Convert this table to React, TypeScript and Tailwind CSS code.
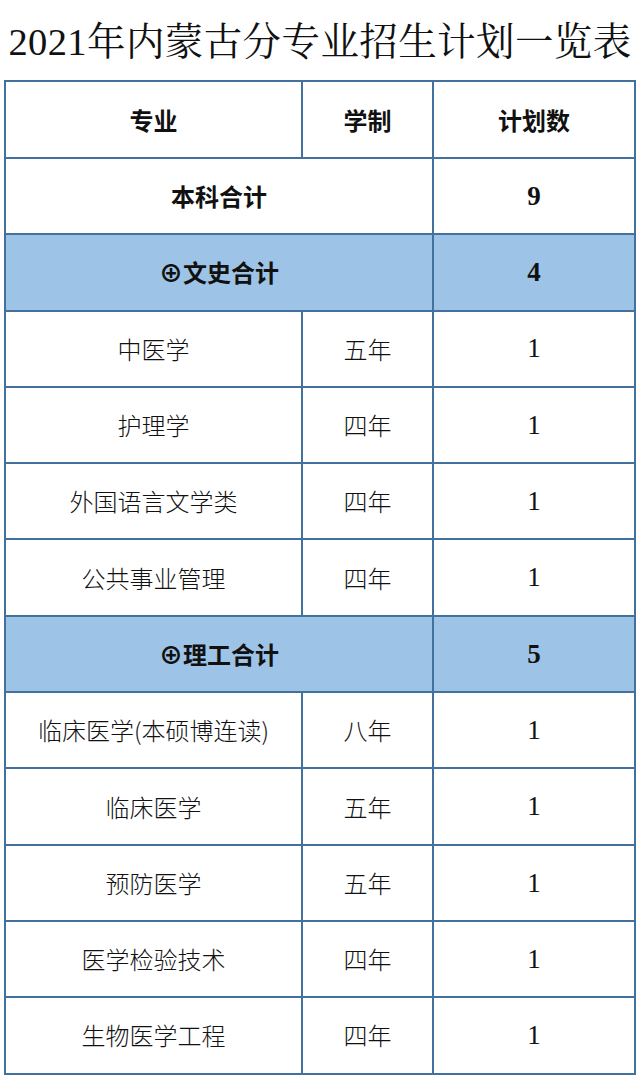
import React from "react";

type Row =
  | { kind: "total"; name: string; count: string; blue?: boolean }
  | { kind: "item"; name: string; years: string; count: string };

const rows: Row[] = [
  { kind: "total", name: "本科合计", count: "9" },
  { kind: "total", name: "⊕文史合计", count: "4", blue: true },
  { kind: "item", name: "中医学", years: "五年", count: "1" },
  { kind: "item", name: "护理学", years: "四年", count: "1" },
  { kind: "item", name: "外国语言文学类", years: "四年", count: "1" },
  { kind: "item", name: "公共事业管理", years: "四年", count: "1" },
  { kind: "total", name: "⊕理工合计", count: "5", blue: true },
  { kind: "item", name: "临床医学(本硕博连读)", years: "八年", count: "1" },
  { kind: "item", name: "临床医学", years: "五年", count: "1" },
  { kind: "item", name: "预防医学", years: "五年", count: "1" },
  { kind: "item", name: "医学检验技术", years: "四年", count: "1" },
  { kind: "item", name: "生物医学工程", years: "四年", count: "1" },
];

const cjk = "font-['Noto_Sans_CJK_SC',sans-serif]";
const num = "font-['Liberation_Serif','Noto_Sans_CJK_SC',serif]";
const cell = "border-2 border-[#41719c] text-center align-middle";

const App = () => {
  return (
    <div className="w-[640px] h-[1080px] bg-white text-[#111] overflow-hidden">
      <div className="h-[80px] flex items-center justify-center pt-1">
        <h1 className="text-[38.5px] leading-none tracking-[0.4px] font-['Liberation_Serif','Noto_Serif_CJK_SC','Noto_Sans_CJK_SC',serif]">
          2021年内蒙古分专业招生计划一览表
        </h1>
      </div>
      <table className="ml-[4px] w-[630px] table-fixed border-collapse">
        <colgroup>
          <col className="w-[297px]" />
          <col className="w-[131px]" />
          <col className="w-[202px]" />
        </colgroup>
        <tbody>
          <tr className="h-[77px]">
            <td className={`${cell} ${cjk} text-[24px] font-bold`}>专业</td>
            <td className={`${cell} ${cjk} text-[24px] font-bold`}>学制</td>
            <td className={`${cell} ${cjk} text-[24px] font-bold`}>计划数</td>
          </tr>
          {rows.map((r, i) =>
            r.kind === "total" ? (
              <tr key={i} className={`h-[76.3px] ${r.blue ? "bg-[#9dc3e6]" : ""}`}>
                <td colSpan={2} className={`${cell} ${cjk} text-[24px] font-bold`}>
                  {r.name}
                </td>
                <td className={`${cell} ${num} text-[27px] font-bold`}>{r.count}</td>
              </tr>
            ) : (
              <tr key={i} className="h-[76.3px]">
                <td className={`${cell} ${cjk} text-[24px] font-light`}>{r.name}</td>
                <td className={`${cell} ${cjk} text-[24px] font-light`}>{r.years}</td>
                <td className={`${cell} ${num} text-[27px]`}>{r.count}</td>
              </tr>
            )
          )}
        </tbody>
      </table>
    </div>
  );
};

export default App;
